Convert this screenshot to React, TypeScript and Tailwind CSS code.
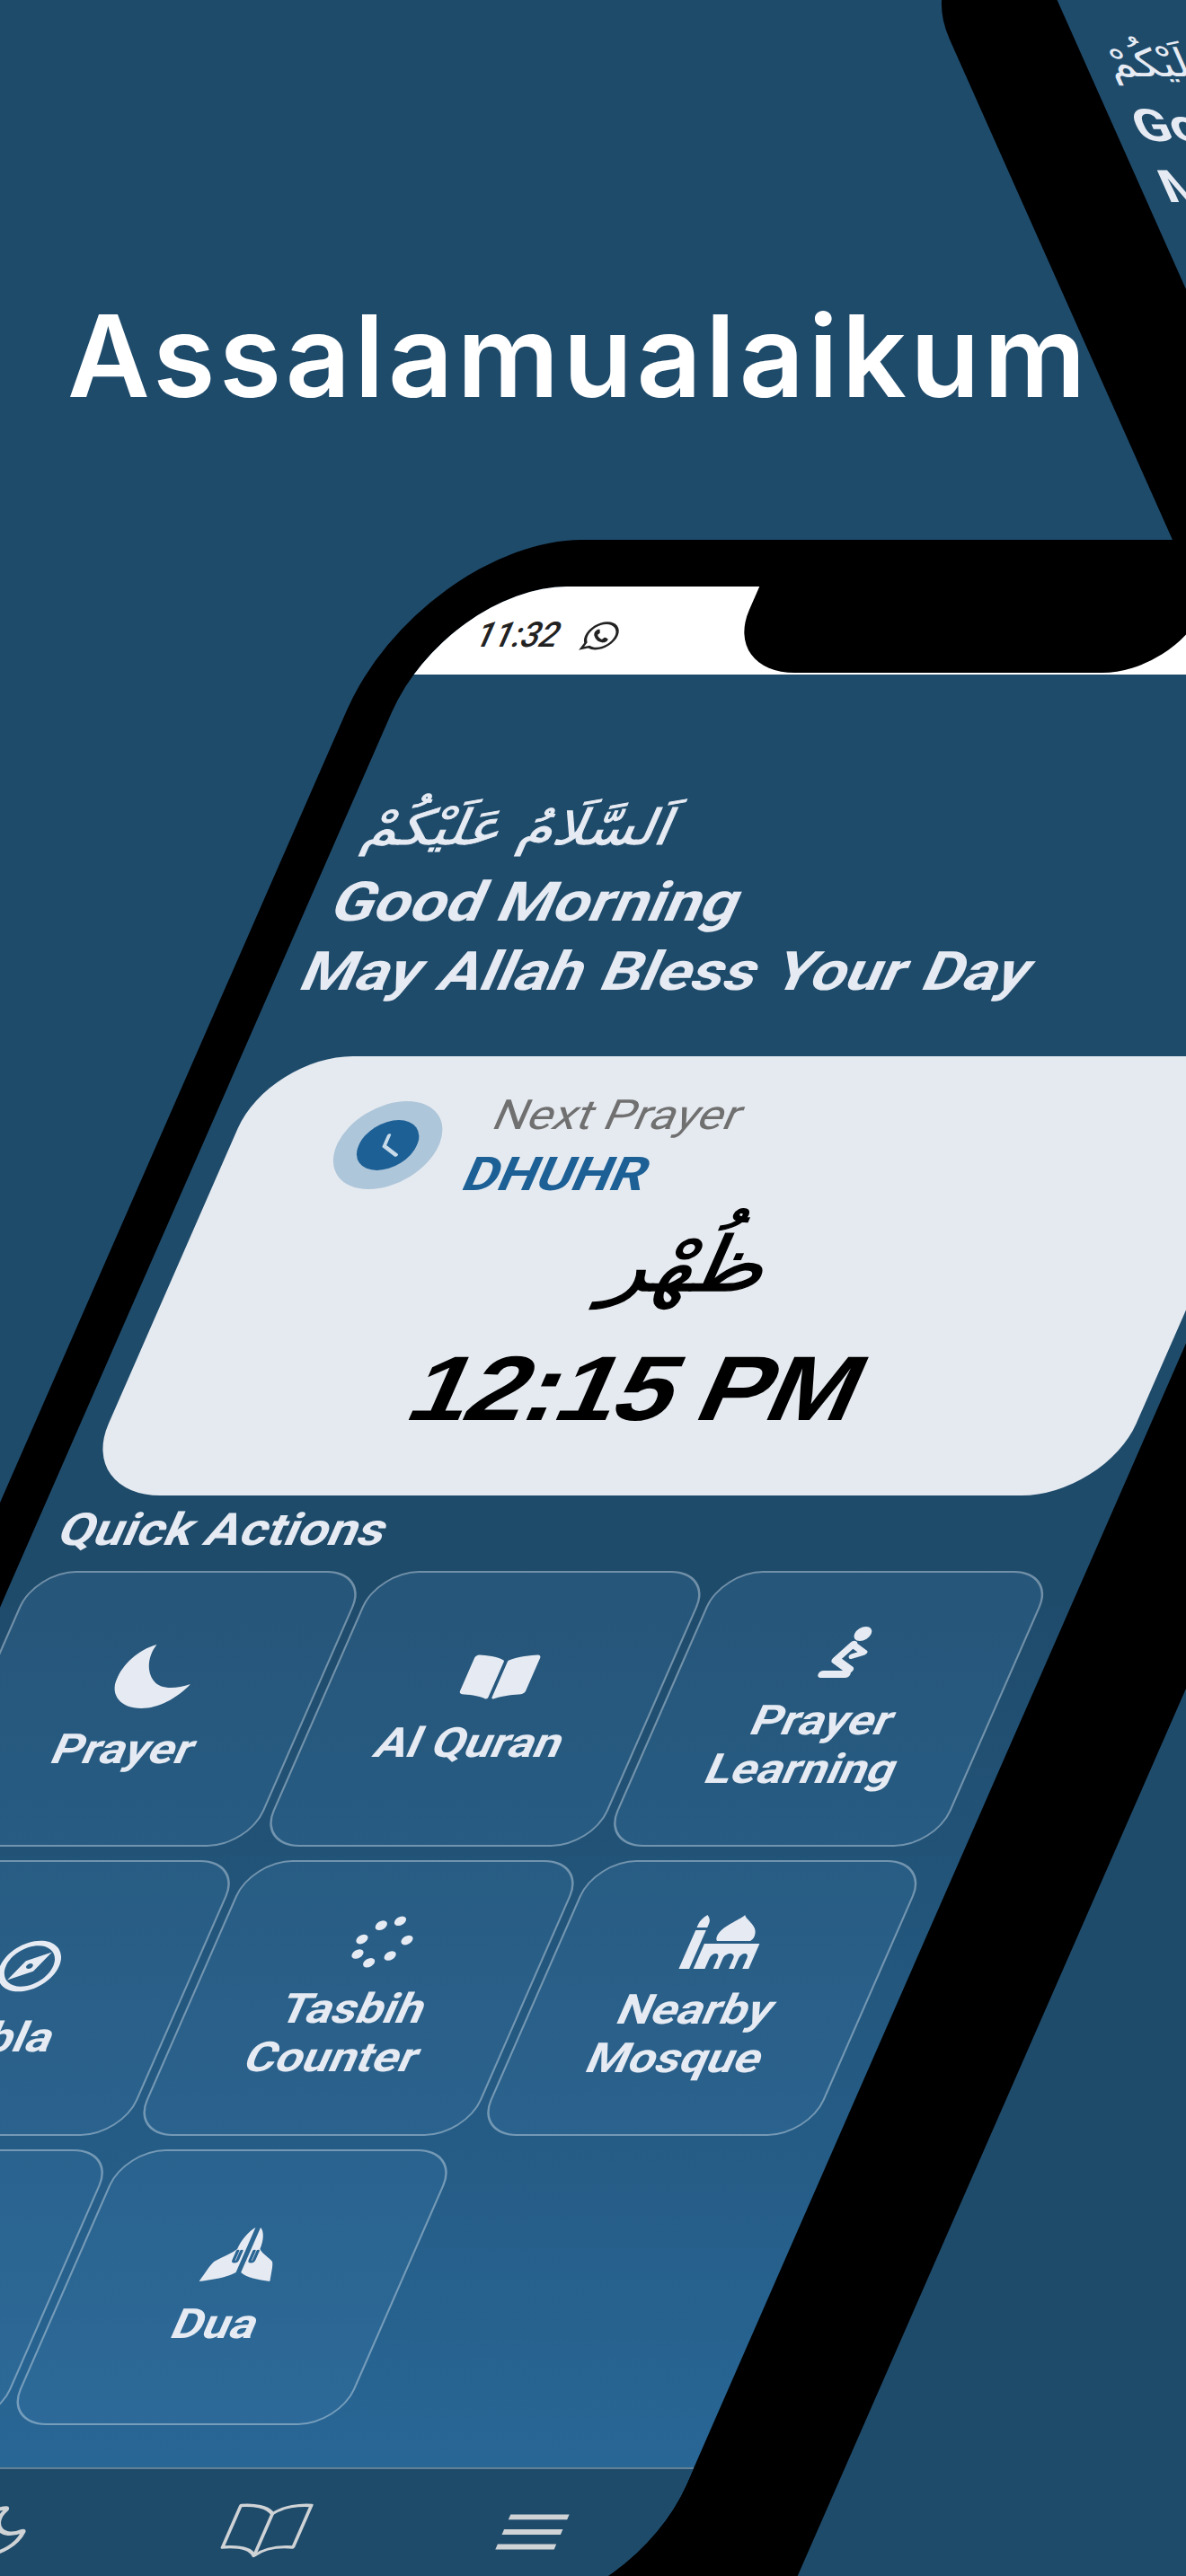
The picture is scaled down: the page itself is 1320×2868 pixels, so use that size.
import React from 'react';
import { FaBookOpen, FaWhatsapp } from 'react-icons/fa';
import { MdOutlineExplore } from 'react-icons/md';
import { Moon, Home } from 'lucide-react';

const Crescent = () => (
  <svg viewBox="0 0 73 71" className="h-[71px] w-[73px]" fill="currentColor">
    <path d="M24 0C8 6 0 22 0 38c0 18 16 33 36 33 16 0 30-11 37-27-13 6-27 6-37-4C26 30 20 14 24 0Z" />
  </svg>
);

const TasbihDots = () => (
  <svg viewBox="0 0 60 60" className="h-[58px] w-[58px]" fill="currentColor">
    <circle cx="38" cy="6" r="5.5" />
    <circle cx="21" cy="11" r="5.5" />
    <circle cx="8" cy="27" r="5.5" />
    <circle cx="10" cy="44" r="5.5" />
    <circle cx="25" cy="54" r="5.5" />
    <circle cx="43" cy="46" r="5.5" />
    <circle cx="53" cy="28" r="5.5" />
  </svg>
);

const Kneeling = () => (
  <svg viewBox="0 0 50 60" className="h-[60px] w-[50px]" fill="none" stroke="currentColor" strokeWidth="8" strokeLinecap="round" strokeLinejoin="round">
    <circle cx="27" cy="9" r="8" fill="currentColor" stroke="none" />
    <path d="M22 21 12 38l17 11" />
    <path d="M28 54H5" />
    <path d="M22 21l14 9-10 4" strokeWidth="6" />
  </svg>
);

const MosqueIcon = () => (
  <svg viewBox="0 0 70 60" className="h-[60px] w-[70px]" fill="currentColor">
    <path d="M6 0c3 3 5 6 5 10v4H1v-4C1 6 3 3 6 0Z" />
    <rect x="1" y="17" width="10" height="43" />
    <path d="M42 0c3 6 18 12 18 24 0 2-1 4-2 5H26c-1-1-2-3-2-5C24 12 39 6 42 0Z" />
    <path
      fillRule="evenodd"
      d="M15 32h53v28h-6V48c0-3-2-5-4-5s-4 2-4 5v12h-5V48c0-3-3-5-5-5s-5 2-5 5v12h-5V48c0-3-2-5-4-5s-4 2-4 5v12h-11V32Z"
    />
  </svg>
);

const PrayingHands = () => (
  <svg viewBox="0 0 56 62" className="h-[62px] w-[68px]" preserveAspectRatio="none" fill="currentColor">
    <path d="M26 0c-4 4-7 14-7 24-4 6-11 10-14 14-2 4-3 12-5 22 10-2 20-4 26-10Z" />
    <path d="M30 0c4 4 7 14 7 24 4 6 11 10 14 14 2 4 3 12 5 22-10-2-20-4-26-10Z" />
    <path d="M20 26v10c0 3 3 3 3 0V26M33 26v10c0 3 3 3 3 0V26" fill="none" stroke="#2b6593" strokeWidth="2.5" strokeLinecap="round" />
  </svg>
);

const NavBook = () => (
  <svg viewBox="0 0 70 60" className="h-[68px] w-[74px]" fill="none" stroke="currentColor" strokeWidth="3.2" strokeLinejoin="round">
    <path d="M35 12C28 4 14 2 3 3v44c11-1 25 0 32 9 7-9 21-10 32-9V3c-11-1-25 1-32 9Z" />
    <path d="M35 12v44" />
  </svg>
);

const NavMenu = () => (
  <svg viewBox="0 0 70 68" className="h-[68px] w-[68px]" fill="currentColor">
    <rect x="6" y="15" width="58" height="6" />
    <rect x="6" y="32" width="58" height="6" />
    <rect x="6" y="49" width="58" height="6" />
  </svg>
);

const actions: { lines: string[]; icon: React.ReactNode }[] = [
  { lines: ['Prayer'], icon: <Crescent /> },
  { lines: ['Al Quran'], icon: <FaBookOpen className="h-[56px] w-[68px]" /> },
  { lines: ['Prayer', 'Learning'], icon: <Kneeling /> },
  { lines: ['Qibla'], icon: <MdOutlineExplore className="h-[68px] w-[68px]" /> },
  { lines: ['Tasbih', 'Counter'], icon: <TasbihDots /> },
  { lines: ['Nearby', 'Mosque'], icon: <MosqueIcon /> },
  { lines: ['Calendar'], icon: <Moon className="h-[64px] w-[64px]" /> },
  { lines: ['Dua'], icon: <PrayingHands /> },
];

const ActionCard = ({ lines, icon }: { lines: string[]; icon: React.ReactNode }) => (
  <div className="flex h-[307px] flex-col items-center justify-center gap-[18px] rounded-[40px] border-2 border-white/35 bg-[#3a78a8]/25 text-[#e6ebf3]">
    {icon}
    <div className="text-center text-[46px] leading-[54px] font-bold">
      {lines.map((l) => (
        <div key={l}>{l}</div>
      ))}
    </div>
  </div>
);

const App: React.FC = () => {
  return (
    <div className="relative h-[2868px] w-[1320px] overflow-hidden bg-[#1f4b6b] font-['Roboto',sans-serif]">
      <h1 className="pt-[316px] pl-[75px] font-['Inter',sans-serif] text-[126px] leading-[160px] font-semibold tracking-[4.5px] text-white">
        Assalamualaikum
      </h1>

      {/* phone behind, leans the other way */}
      <div className="absolute top-[-66px] left-[1008px] h-[680px] w-[1200px] origin-top-left rounded-tl-[110px] bg-black pt-[52px] pl-[120px] [transform:skewX(24deg)_scaleX(1.16)]">
        <div className="h-full bg-[#1f4b6b] pt-[54px] pl-[20px] text-[#e6ebf3]">
          <div className="font-['DejaVu_Sans',sans-serif] text-[43px] leading-[60px]">اَلسَّلَامُ عَلَيْكُمْ</div>
          <div className="mt-[6px] text-[50px] leading-[68px] font-bold">Good Morning</div>
          <div className="text-[50px] leading-[68px] font-bold">May Allah Bless Your Day</div>
        </div>
      </div>

      {/* main phone */}
      <div className="absolute top-[601px] left-[469px] h-[2500px] w-[1216px] origin-top-left rounded-[154px/190px] bg-black pt-[52px] pr-[145px] pl-[44px] [transform:skewX(-23.63deg)_scaleX(1.16)]">
        <div className="flex h-[2252px] flex-col overflow-hidden rounded-[115px/140px] bg-linear-to-b from-[#1f4b6b] from-50% to-[#2a6b9d]">
          <div className="flex h-[98px] shrink-0 bg-white">
            <div className="flex w-[300px] items-center gap-[22px] pt-[12px] pl-[50px] text-[31px] font-medium text-[#222]">
              <span className="scale-y-[1.25]">11:32</span>
              <FaWhatsapp className="h-[36px] w-[36px]" />
            </div>
            <div className="h-[96px] w-[435px] rounded-b-[70px] bg-black" />
          </div>

          <div className="pt-[136px] pl-[25px] text-[#e6ebf3]">
            <div className="font-['DejaVu_Sans',sans-serif] text-[54px] leading-[70px] [-webkit-text-stroke:1px_#e6ebf3]">اَلسَّلَامُ عَلَيْكُمْ</div>
            <div className="mt-[8px] text-[61px] leading-[78px] font-bold">Good Morning</div>
            <div className="text-[60px] leading-[78px] font-bold [word-spacing:3px]">May Allah Bless Your Day</div>
          </div>

          <div className="mt-[55px] mr-[14px] ml-[27px] h-[489px] shrink-0 rounded-[80px] bg-[#e5eaf0] pt-[50px] pl-[102px]">
            <div className="flex gap-[42px]">
              <div className="flex h-[98px] w-[98px] items-center justify-center rounded-full bg-[#aec6da]">
                <svg viewBox="0 0 56 56" className="h-[56px] w-[56px]">
                  <circle cx="28" cy="28" r="28" fill="#1d6096" />
                  <path d="M25 17v12l15 10" fill="none" stroke="#c8dbe9" strokeWidth="3.5" strokeLinecap="round" strokeLinejoin="round" />
                </svg>
              </div>
              <div className="-mt-[21px]">
                <div className="text-[46px] leading-[73px] text-[#707070]">Next Prayer</div>
                <div className="-ml-[4px] text-[52px] leading-[60px] font-bold text-[#1d6096]">DHUHR</div>
              </div>
            </div>
            <div className="mt-[15px] -ml-[102px] text-center font-['DejaVu_Sans',sans-serif] text-[84px] leading-[110px] text-black [-webkit-text-stroke:1.5px_#000]">ظُهْر</div>
            <div className="mt-[23px] -ml-[102px] text-center font-['Liberation_Sans',sans-serif] text-[102px] leading-[120px] font-bold tracking-[-2px] text-black">12:15 PM</div>
          </div>

          <div className="mt-[9px] pl-[26px] text-[50px] leading-[58px] font-bold text-[#e6ebf3]">Quick Actions</div>

          <div className="mt-[17px] grid grid-cols-3 gap-x-[8px] gap-y-[15px] pr-[29px] pl-[18px]">
            {actions.map((a) => (
              <ActionCard key={a.lines.join(' ')} lines={a.lines} icon={a.icon} />
            ))}
          </div>

          <div className="mt-[47px] grid flex-1 grid-cols-4 border-t-2 border-white/30 bg-[#1f4b6b] pt-[35px] text-[#cfd3d6]">
            <div className="flex flex-col items-center gap-[10px] text-[34px] leading-[40px]">
              <Home className="h-[68px] w-[68px]" strokeWidth={1.6} />
              <span>Home</span>
            </div>
            <div className="flex flex-col items-center gap-[10px] text-[34px] leading-[40px]">
              <Moon className="h-[68px] w-[68px]" strokeWidth={1.6} />
              <span>Prayer</span>
            </div>
            <div className="flex flex-col items-center gap-[10px] text-[34px] leading-[40px]">
              <NavBook />
              <span>Quran</span>
            </div>
            <div className="flex flex-col items-center gap-[10px] text-[34px] leading-[40px]">
              <NavMenu />
              <span>More</span>
            </div>
          </div>
        </div>
      </div>
    </div>
  );
};

export default App;
